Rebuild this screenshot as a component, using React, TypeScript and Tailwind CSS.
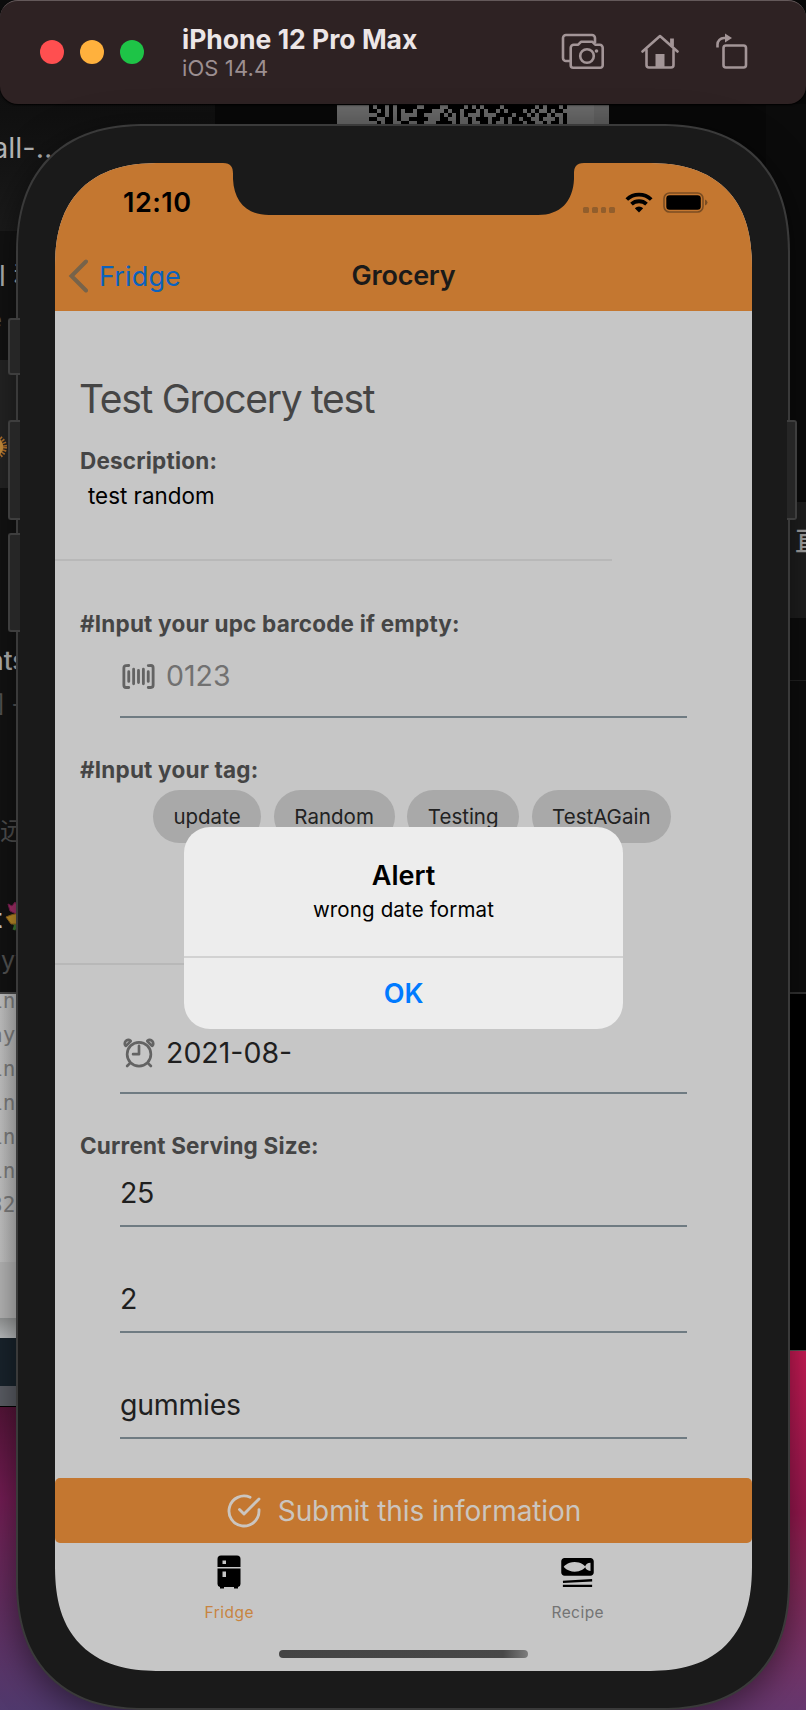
import React from "react";
import { IoAlarmOutline, IoBarcodeOutline } from "react-icons/io5";
import { FiCheckCircle } from "react-icons/fi";
import { MdSetMeal } from "react-icons/md";

const QR_ROWS = [
  "#.##.#.#####..####..####.#.#.####.########.#.###.#",
  "##.#.#.#.##.####...#.##.###.#.##.#.####.#.#..#.##.",
  "..##.#.#....##....#.#.#.#...#...####.###.#.##.#..#",
  "##..##.#..#####...##..#..#.###.##.#.##.##..#...#.#",
  "..#.##..##..##...####.#..#..##.#..#.###.##..#.##.#",
];

function QrStrip() {
  return (
    <div className="absolute top-[105px] left-[337px] flex h-5 w-[272px] bg-[#6a6a6a] pl-8">
      <svg className="h-5 w-[198px]" viewBox="0 0 50 5" preserveAspectRatio="none" shapeRendering="crispEdges">
        {QR_ROWS.map((row, y) =>
          row.split("").map((c, x) => (c === "#" ? <rect key={`${x}-${y}`} x={x} y={y} width="1" height="1" /> : null)),
        )}
      </svg>
      <div className="ml-auto h-full w-[15px] bg-[#626262]" />
    </div>
  );
}

function Desktop() {
  return (
    <div className="absolute inset-0 overflow-hidden bg-[#080808]">
      <div className="absolute top-0 left-0 h-[231px] w-[215px] bg-gradient-to-b from-[#0c0c0c] via-[#101010] to-[#1b1b1b]" />
      <div className="absolute top-[231px] left-0 h-[129px] w-10 bg-[#121212]" />
      <div className="absolute top-[360px] left-0 h-[128px] w-10 bg-[#242424]" />
      <div className="absolute top-[488px] left-0 h-[505px] w-10 bg-[#131313]" />
      <div className="absolute top-[992px] left-0 h-[326px] w-10 border-t-2 border-[#4a4a4a] bg-gradient-to-r from-[#c8c8c8] to-[#b4b4b4]" />
      <div className="absolute top-[1262px] left-0 h-14 w-10 bg-[#bababa]" />
      <div className="absolute top-[1318px] left-0 h-5 w-10 bg-gradient-to-b from-[#979999] to-[#bfc2c4]" />
      <div className="absolute top-[1338px] left-0 h-12 w-10 bg-[#19242d]" />
      <div className="absolute top-[1386px] left-0 h-5 w-10 bg-[#5c5f66]" />
      <div className="absolute top-[1406px] left-0 h-[304px] w-[403px] border-t border-black bg-gradient-to-b from-[#561539] via-[#751d55] via-30% to-[#50396d]" />

      <div className="absolute top-[104px] right-0 h-[398px] w-10 bg-[#0b0b0b]" />
      <div className="absolute top-[502px] right-0 h-[116px] w-10 bg-[#1e1e1e]" />
      <div className="absolute top-[618px] right-0 h-[375px] w-10 bg-[#0d0d0d]" />
      <div className="absolute top-[680px] right-0 h-px w-10 bg-[#222222]" />
      <div className="absolute top-[992px] right-0 h-[358px] w-10 border-t-2 border-[#333333] bg-black" />
      <div className="absolute top-[1350px] right-0 h-[360px] w-[403px] border-t border-[#555555] bg-gradient-to-b from-[#cc1a56] via-[#9a1850] via-45% to-[#66376e]" />

      <QrStrip />

      <div className="absolute top-[132px] left-[-8px] text-[29px] leading-8 whitespace-nowrap text-[#b4b4b4]">all-…</div>
      <div className="absolute top-[260px] left-[-1px] text-[28px] leading-8 whitespace-nowrap text-[#b4b4b4]">l 科</div>
      <div className="absolute top-[306px] left-[-12px] text-[24px] leading-7 text-[#5a5a5a]">e</div>
      <svg className="absolute top-[433px] left-[-20px] size-7" viewBox="0 0 28 28">
        <circle cx="14" cy="14" r="9.500" fill="#c9903c" />
        <circle cx="14" cy="14" r="11" fill="none" stroke="#b8742c" strokeWidth="4" strokeDasharray="1.5 1.4" />
      </svg>
      <div className="absolute top-[645px] left-[-12px] text-[26px] leading-8 font-medium whitespace-nowrap text-[#b4b4b4]">nts</div>
      <div className="absolute top-[688px] left-[-4px] text-[24px] leading-8 whitespace-nowrap text-[#555555]">] -</div>
      <div className="absolute top-[815px] left-0 text-[25px] leading-8 whitespace-nowrap text-[#505050]">远</div>
      <div className="absolute top-[903px] left-[-7px] text-[26px] leading-8 font-semibold text-[#d0d0d0]">t</div>
      <svg className="absolute top-[901px] left-[5px] h-[30px] w-6" viewBox="0 0 24 30" fill="none">
        <path d="M5 18l9 10M14 14l-5 15" stroke="#3f7d35" strokeWidth="3" />
        <path d="M3 3l4 2 3-4 3 4 5-2-2 6-5 4-6-3z" fill="#a8326c" stroke="#7c1d52" strokeWidth="1" />
        <path d="M1 16l5-2 8-2 4 4-5 7H6z" fill="#c3922a" stroke="#94661c" strokeWidth="1" />
      </svg>
      <div className="absolute top-[944px] left-px text-[25px] leading-8 text-[#555555]">yy</div>
      <div className="absolute top-[984px] left-[-10px] flex flex-col font-['DejaVu_Sans_Mono',monospace] text-[21px] leading-[34px] text-[#808080]">
        <span>in</span>
        <span>ay</span>
        <span>in</span>
        <span>in</span>
        <span>in</span>
        <span>in</span>
        <span>32</span>
      </div>
      <div className="absolute top-[524px] left-[795px] font-['Noto_Sans_CJK_SC',sans-serif] text-[27px] leading-8 font-medium text-[#a4a4a4]">直</div>
    </div>
  );
}

function ScreenshotIcon() {
  return (
    <svg className="h-9 w-[43px]" viewBox="0 0 43 36" fill="none" stroke="#a39597" strokeWidth="2.6" strokeLinejoin="round">
      <path d="M9 28H5a3 3 0 0 1-3-3V5a3 3 0 0 1 3-3h26a3 3 0 0 1 3 3v5" />
      <path d="M10 15a3 3 0 0 1 3-3h4.500l3-3h11l3 3H39a3 3 0 0 1 3 3v17.500a2.500 2.500 0 0 1-2.500 2.500h-27a2.500 2.500 0 0 1-2.500-2.500z" transform="translate(-.3 -.3)" />
      <circle cx="26" cy="23" r="6.8" />
      <circle cx="35.500" cy="18" r="1.8" fill="#a39597" stroke="none" />
    </svg>
  );
}

function HomeIcon() {
  return (
    <svg className="h-9 w-[38px]" viewBox="0 0 38 36" fill="none" stroke="#a39597" strokeWidth="2.6" strokeLinecap="round" strokeLinejoin="round">
      <path d="M1.500 18.500L19 3 36.500 18.500" />
      <path d="M5.500 17v15a2.500 2.500 0 0 0 2.500 2.500h22a2.500 2.500 0 0 0 2.500-2.500V17" />
      <path d="M31 5.500v8" strokeWidth="3.800" strokeLinecap="butt" />
      <path d="M14.500 21h9v13h-9z" fill="#a39597" stroke="none" />
    </svg>
  );
}

function RotateIcon() {
  return (
    <svg className="h-9 w-8" viewBox="0 0 32 36" fill="none" stroke="#a39597" strokeWidth="2.6">
      <rect x="7.500" y="12.500" width="22.500" height="22" rx="2.500" />
      <path d="M1.500 14.500v-3a6.500 6.500 0 0 1 6.500-6.500h3" />
      <path d="M9 .5l7 4.500-7 4.500z" fill="#a39597" stroke="none" />
    </svg>
  );
}

function TitleBar() {
  return (
    <div className="relative flex h-[104px] items-center rounded-[18px] border-t border-[#64595a] bg-[#2e2223] pl-10 shadow-[0_1px_2px_#000]">
      <div className="flex gap-4 pb-[2px]">
        <span className="size-6 rounded-full bg-[#ff4f50]" />
        <span className="size-6 rounded-full bg-[#ffb13d]" />
        <span className="size-6 rounded-full bg-[#1ec447]" />
      </div>
      <div className="ml-[38px] flex flex-col pt-px">
        <span className="text-[26.5px] leading-[30px] font-bold text-[#ece6e7]">iPhone 12 Pro Max</span>
        <span className="text-[22px] leading-[29px] tracking-[0.1px] text-[#9c8f91]">iOS 14.4</span>
      </div>
      <div className="mr-[58px] ml-auto flex items-center gap-[37px] pb-1">
        <ScreenshotIcon />
        <HomeIcon />
        <RotateIcon />
      </div>
    </div>
  );
}

function Notch() {
  return (
    <svg className="absolute top-0 left-[168px] h-[53px] w-[361px]" viewBox="0 0 361 53" fill="#1a1a1a">
      <path d="M0 0C8 0 10 4 10 11V16C11 39 24 52 46 52H315C337 52 350 39 351 16V11C351 4 353 0 361 0Z" />
    </svg>
  );
}

function StatusBar() {
  return (
    <div className="flex h-20 items-center pr-[44px] pl-[68px]">
      <span className="text-[27px] leading-8 font-semibold tracking-[0.5px]">12:10</span>
      <div className="ml-auto flex items-center pb-[2px]">
        <div className="mt-4 flex gap-[3px]">
          {[0, 1, 2, 3].map((i) => (
            <span key={i} className="size-[5.7px] rounded-[1.500px] bg-[#925e2c]" />
          ))}
        </div>
        <svg className="ml-2.5 h-[21px] w-[28px]" viewBox="0 0 28 21" fill="none" stroke="#000" strokeWidth="3.8">
          <path d="M1.800 7.500a17.500 17.500 0 0 1 24.400 0" />
          <path d="M6.500 12.200a11 11 0 0 1 15 0" />
          <path d="M14 20.500l-4.200-4.300a6.200 6.200 0 0 1 8.400 0z" fill="#000" stroke="none" />
        </svg>
        <svg className="ml-2.5 h-[21px] w-[45px]" viewBox="0 0 45 21">
          <rect x="1" y="1" width="39" height="19" rx="5.500" fill="none" stroke="#7b4d22" strokeWidth="1.600" />
          <rect x="3.300" y="3.200" width="34.500" height="14.600" rx="3.300" />
          <path d="M42 7.500q2.500 1 2.500 3t-2.500 3z" fill="#7b4d22" />
        </svg>
      </div>
    </div>
  );
}

function Header() {
  return (
    <div className="mb-px h-[148px] shrink-0 bg-[#c47730]">
      <StatusBar />
      <div className="grid h-[66px] grid-cols-3 items-center">
        <div className="flex items-center pl-[13px]">
          <svg className="h-[34px] w-5" viewBox="0 0 20 34" fill="none" stroke="#77634a" strokeWidth="4" strokeLinecap="round" strokeLinejoin="miter">
            <path d="M18 2.500L3.500 17 18 31.500" />
          </svg>
          <span className="ml-[11px] pt-[2px] text-[27px] leading-8 tracking-[0.15px] text-[#0b62bd]">Fridge</span>
        </div>
        <span className="text-center text-[27px] leading-8 font-semibold tracking-[-0.25px] text-[#1b1a19]">Grocery</span>
      </div>
    </div>
  );
}

function Label({ children }: { children: React.ReactNode }) {
  return (
    <div className="flex h-8 items-center pb-px pl-[25px] text-[22.500px] font-bold tracking-[0.2px] whitespace-nowrap text-[#454545]">{children}</div>
  );
}

function Field({ children }: { children: React.ReactNode }) {
  return (
    <div className="mr-[65px] ml-[65px] flex h-[62px] items-center border-b-2 border-[#6f7b82] pb-[19px] text-[28.500px] text-[#1f1f1f]">{children}</div>
  );
}

function PlainField({ children }: { children: React.ReactNode }) {
  return (
    <div className="mr-[65px] ml-[65px] flex h-[62px] items-center border-b-2 border-[#6f7b82] pb-[3px] text-[28.500px] tracking-[-0.3px] text-[#1f1f1f]">
      {children}
    </div>
  );
}

const TAGS = [
  { name: "update", box: "w-[108px]" },
  { name: "Random", box: "w-[121px]" },
  { name: "Testing", box: "w-[112px]" },
  { name: "TestAGain", box: "w-[139px]" },
];

function Form() {
  return (
    <div className="flex flex-1 flex-col">
      <h1 className="mt-[63px] flex h-12 items-center pl-[24px] text-[39px] tracking-[-1.3px] text-[#454545]">Test Grocery test</h1>
      <div className="mt-[22px]">
        <Label>Description:</Label>
      </div>
      <p className="mt-1 flex h-8 items-center pb-[2px] pl-[33px] text-[22.400px]">test random</p>
      <div className="mt-[46px] h-0.5 w-[557px] bg-[#b8b8b8]" />
      <div className="mt-[47px]">
        <Label>#Input your upc barcode if empty:</Label>
      </div>
      <div className="mt-4">
        <Field>
          <IoBarcodeOutline className="mr-2 -ml-px size-[39px] text-[#636363] [&_*]:[stroke-width:37px]" />
          <span className="text-[#717171]">0123</span>
        </Field>
      </div>
      <div className="mt-[36px]">
        <Label>#Input your tag:</Label>
      </div>
      <div className="mt-1 ml-[98px] flex gap-[12.600px]">
        {TAGS.map((t) => (
          <span key={t.name} className={`${t.box} flex h-[53px] items-center justify-center rounded-full bg-[#a9a9a9] pt-px text-[20.500px] text-[#222222]`}>
            {t.name}
          </span>
        ))}
      </div>
      <div className="mt-[120px] h-0.5 w-[557px] bg-[#b8b8b8]" />
      <div className="mt-[67px]">
        <Field>
          <IoAlarmOutline className="mr-2 size-[38px] text-[#636363] [&_*]:[stroke-width:36px]" />
          <span className="pt-px">2021-08-</span>
        </Field>
      </div>
      <div className="mt-[36px]">
        <Label>Current Serving Size:</Label>
      </div>
      <div className="mt-[3px] flex flex-col gap-11">
        <PlainField>25</PlainField>
        <PlainField>2</PlainField>
        <PlainField>gummies</PlainField>
      </div>
    </div>
  );
}

function TabBar() {
  return (
    <div className="grid h-[128px] shrink-0 grid-cols-2 text-[15.500px] leading-5">
      <div className="flex flex-col items-center pt-3">
        <svg className="mr-px h-[34px] w-6" viewBox="0 0 24 34">
          <path d="M4 .5h16a3.500 3.500 0 0 1 3.500 3.500v8H.5V4A3.500 3.500 0 0 1 4 .5zM.5 13.500h23V29a3 3 0 0 1-2.500 3v1.500h-4V32H7v1.500H3V32a3 3 0 0 1-2.500-3z" />
          <path d="M5.500 5.500h3.500v3.500H5.500zM5.500 16.500h3.500V22H5.500z" fill="#c6c6c6" />
        </svg>
        <span className="mt-[14px] tracking-[0.45px] text-[#c88440]">Fridge</span>
      </div>
      <div className="flex flex-col items-center pt-2.5">
        <MdSetMeal className="size-[39px] text-black" />
        <span className="mt-[11px] tracking-[0.45px] text-[#747474]">Recipe</span>
      </div>
    </div>
  );
}

function AlertDialog() {
  return (
    <div className="absolute top-[664px] left-[129px] flex h-[202px] w-[439px] flex-col overflow-hidden rounded-[26px] bg-[#ededed] text-center">
      <div className="flex h-[131px] flex-col items-center border-b-2 border-[#d2d2d2] pt-[33px]">
        <span className="text-[27px] leading-8 font-semibold">Alert</span>
        <span className="mt-[2px] text-[20.500px] leading-8 tracking-[0.15px]">wrong date format</span>
      </div>
      <button className="flex-1 text-[27px] leading-8 font-semibold text-[#007aff]">OK</button>
    </div>
  );
}

function Phone() {
  return (
    <div className="relative mt-5 ml-4 h-[1586px] w-[774px] rounded-[130px] border-2 border-[#3a3a3a] bg-[#1a1a1a] pt-[37px] pl-[37px] shadow-[0_8px_36px_rgba(0,0,0,0.5)] [corner-shape:superellipse(1.24)]">
      <div className="relative flex h-[1508px] w-[697px] flex-col overflow-hidden rounded-[106px] bg-[#c6c6c6] [corner-shape:superellipse(1.3)]">
        <Header />
        <Form />
        <button className="flex h-[65px] shrink-0 items-center justify-center rounded-[5px] bg-[#c47730] text-[28px] tracking-[-0.08px] text-[#cbc5bf]">
          <FiCheckCircle className="mr-[16px] size-9" strokeWidth={1.9} />
          <span>Submit this information</span>
        </button>
        <TabBar />
        <div className="absolute bottom-[13px] left-[224px] h-2 w-[249px] rounded-full bg-gradient-to-r from-[#444444] via-[#484848] via-90% to-[#7d7d7d]" />
        <Notch />
        <AlertDialog />
      </div>
    </div>
  );
}

function SideButtons() {
  return (
    <>
      <div className="absolute top-[318px] left-2 h-[57px] w-3 rounded-l-[3px] border-2 border-r-0 border-[#3e3e3e] bg-[#262626]" />
      <div className="absolute top-[420px] left-2 h-[100px] w-3 rounded-l-[3px] border-2 border-r-0 border-[#3e3e3e] bg-[#262626]" />
      <div className="absolute top-[533px] left-2 h-[99px] w-3 rounded-l-[3px] border-2 border-r-0 border-[#3e3e3e] bg-[#262626]" />
      <div className="absolute top-[420px] left-[787px] h-[100px] w-2.5 rounded-r-[3px] border-2 border-l-0 border-[#3e3e3e] bg-[#262626]" />
    </>
  );
}

export default function App() {
  return (
    <main className="relative h-[1710px] w-[806px] overflow-hidden bg-black font-['Inter','Noto_Sans_CJK_SC',sans-serif] text-black">
      <Desktop />
      <TitleBar />
      <Phone />
      <SideButtons />
    </main>
  );
}
